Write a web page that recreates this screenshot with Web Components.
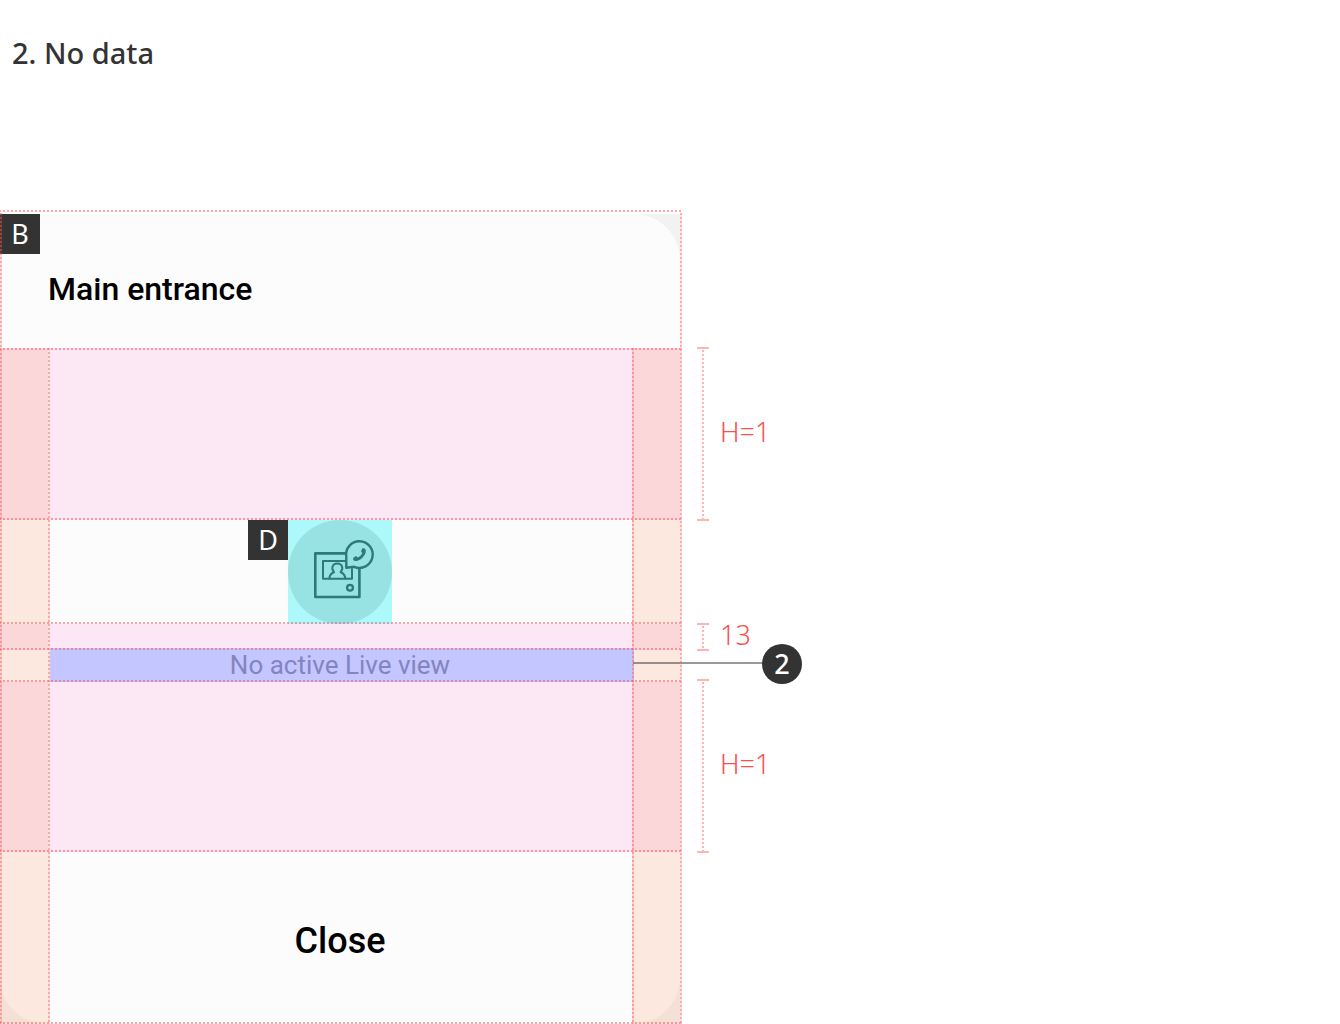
<!DOCTYPE html>
<html lang="en">
<head>
<meta charset="utf-8">
<title>No data</title>
<style>
body { margin: 0; background: #fff; font-family: "Noto Sans", sans-serif; color: #333; }
</style>
</head>
<body>
<spec-page>
  <h1 slot="title">2. No data</h1>
  <device-card>
    <spec-tag slot="tag">B</spec-tag>
    <h2 slot="heading">Main entrance</h2>
    <spec-band class="tall" tone="pink"></spec-band>
    <spec-band tone="plain"><door-icon><spec-tag>D</spec-tag></door-icon></spec-band>
    <spec-band class="gap" tone="pink"></spec-band>
    <spec-band class="text" tone="label">No active Live view<spec-callout slot="note">2</spec-callout></spec-band>
    <spec-band class="tall" tone="pink"></spec-band>
    <spec-band class="foot" tone="plain"><close-button>Close</close-button></spec-band>
  </device-card>
  <spec-rulers slot="rulers">
    <spec-measure class="tall">H=1</spec-measure>
    <spec-measure class="small">13</spec-measure>
    <spec-measure class="tall">H=1</spec-measure>
  </spec-rulers>
</spec-page>
<script>
function define(name, css, html) {
  const template = document.createElement('template');
  template.innerHTML = '<style>*{box-sizing:border-box}' + css + '</style>' + html;
  customElements.define(name, class extends HTMLElement {
    constructor() {
      super();
      this.attachShadow({ mode: 'open' }).append(template.content.cloneNode(true));
    }
  });
}

define('spec-page', `
  :host { display: block; }
  header { height: 210px; padding: 33px 12px 0; }
  ::slotted(h1) { margin: 0; font-size: 29px; line-height: 40px; font-weight: 500; }
  main { display: flex; align-items: flex-start; }
  .card { flex: 0 1 682px; min-width: 400px; }
`, `<header><slot name="title"></slot></header>
<main><div class="card"><slot></slot></div><slot name="rulers"></slot></main>`);

define('device-card', `
  :host { display: block; position: relative; }
  .back { position: absolute; inset: 4px 2px 0 0; background: #f2f2f2; }
  .back i { display: block; height: 100%; border-radius: 46px; background: #fcfcfc; }
  .content { position: relative; }
  .top { height: 138px; padding: 4px 48px 0 0; display: flex;
    background: linear-gradient(90deg, #ffa5a7 50%, transparent 50%) 3px 0 / 4px 2px repeat-x; }
  ::slotted(h2) { margin: 56px 0 0 8px; font: 500 32px/38px Roboto, sans-serif; color: #000; }
  .line { position: absolute; width: 2px; top: 138px; bottom: 0; pointer-events: none;
    background: linear-gradient(rgba(255,84,84,.5) 50%, rgba(255,84,84,.14) 50%) 0 0 / 2px 4px; }
  .outer { top: 3px; }
  .a { left: 0; } .b { left: 48px; } .c { right: 48px; } .d { right: 0; }
`, `<div class="back"><i></i></div>
<div class="content"><div class="top"><slot name="tag"></slot><slot name="heading"></slot></div><slot></slot></div>
<i class="line outer a"></i><i class="line b"></i><i class="line c"></i><i class="line outer d"></i>`);

define('spec-tag', `
  :host { display: block; flex: none; width: 40px; height: 40px; background: #333; color: #fff;
    font: 400 27px/40px "Noto Sans", sans-serif; text-align: center; }
`, `<slot></slot>`);

define('spec-band', `
  :host { display: flex; position: relative; height: 104px; --side: rgba(252,133,77,.16); --fill: transparent; }
  :host(.tall) { height: 170px; }
  :host(.tall:first-of-type) { height: 172px; }
  :host(.gap) { height: 26px; }
  :host(.text) { height: 32px; }
  :host(.foot) { height: 172px; }
  :host([tone=pink]) { --side: #fcd7da; --fill: #fce7f4; }
  :host([tone=label]) { --fill: #c4c6ff; }
  .side { flex: none; width: 48px; background: var(--side); }
  .main { flex: 1; display: flex; align-items: center; justify-content: center; margin-left: 2px; padding-right: 2px;
    background: var(--fill); font: 400 26px/32px Roboto, sans-serif; color: #8384bf; white-space: nowrap; }
  :host([tone=label]) .main { position: relative; margin: -2px -2px 0 2px; padding-right: 4px; }
  .right { margin-right: 2px; }
  .rule { position: absolute; left: 0; right: 0; bottom: 0; height: 2px;
    background: linear-gradient(90deg, rgba(255,70,90,.5) 50%, transparent 50%) 3px 0 / 4px 2px repeat-x; }
  .rule.first { display: none; bottom: auto; top: 0; }
  :host(.tall:first-of-type) .first { display: block; }
  :host([tone=label]) .first { display: block; top: -2px; }
  :host(.gap) .rule { display: none; }
  .note { position: absolute; right: -120px; top: -6px; width: 169px; }
`, `<div class="side"></div><div class="main"><slot></slot></div><div class="side right"></div>
<i class="rule first"></i><i class="rule"></i><div class="note"><slot name="note"></slot></div>`);

define('spec-callout', `
  :host { display: flex; align-items: center; height: 40px; }
  i { flex: 1; height: 2px; margin-bottom: 2px; background: rgba(51,51,51,.5); }
  b { width: 40px; height: 40px; border-radius: 50%; background: #333; color: #fff; text-align: center;
    font: 500 27px/40px "Noto Sans", sans-serif; }
`, `<i></i><b><slot></slot></b>`);

define('door-icon', `
  :host { display: block; position: relative; width: 104px; height: 104px; background: #adf8fa; }
  svg { display: block; }
  ::slotted(*) { position: absolute; right: 100%; top: 0; }
`, `<svg width="104" height="104" viewBox="0 0 104 104" fill="none" stroke="#2b797b" stroke-width="2.6" stroke-linejoin="round" stroke-linecap="round" aria-hidden="true">
<circle cx="52" cy="52" r="52" fill="#98e2e4" stroke="none"/>
<path d="M57 33.4H27.3V77H71.4V49"/>
<path d="M57.5 41H35V58.7H64V49" stroke-width="2"/>
<path d="M41.3 58.4C41.7 55 43 53.2 46 52.2C42.8 48.5 44.3 43.6 49.3 43.6S55.8 48.5 52.6 52.2C55.6 53.2 56.9 55 57.3 58.4" stroke-width="2"/>
<circle cx="62" cy="67.7" r="2.9" stroke-width="2.3"/>
<path d="M58.3 47.8V36.8A13.3 13.3 0 1 1 66.2 46.8Z" stroke-width="2.4"/>
<path d="M74.2 28.6C75 27.9 76.5 28.2 77.2 29.1C78.7 31.5 77.3 34.8 74.7 37.5C71.8 40.4 68.2 41.7 65.9 40.4C65 39.8 64.8 38.6 65.5 37.8L67.2 36.6C68 36 69 36.4 69.6 37.4C71.7 36.8 73.6 35 74.4 32.8C73.4 32.4 72.9 31.6 73.3 30.8Z" fill="#2b797b" stroke="none"/>
</svg><slot></slot>`);

define('close-button', `
  :host { display: block; margin-top: 6px; }
  button { border: 0; padding: 0; background: none; color: #000; font: 500 36px/42px Roboto, sans-serif; }
`, `<button type="button"><slot></slot></button>`);

define('spec-rulers', `
  :host { display: flex; flex-direction: column; margin: 137px 0 0 15px; }
  ::slotted(.tall) { height: 174px; }
  ::slotted(.small) { height: 28px; margin: 102px 0 28px; }
`, `<slot></slot>`);

define('spec-measure', `
  :host { display: flex; gap: 11px; align-items: center; color: #fb5050; font: 300 27px/28px "Noto Sans", sans-serif; }
  i { align-self: stretch; width: 12px; border: solid #ffb4b4; border-width: 2px 0;
    background: linear-gradient(#ffb4b4 50%, transparent 50%) 5px 1px / 2px 4px repeat-y; }
  span { margin: -4px 0 0; }
`, `<i></i><span><slot></slot></span>`);
</script>
</body>
</html>
